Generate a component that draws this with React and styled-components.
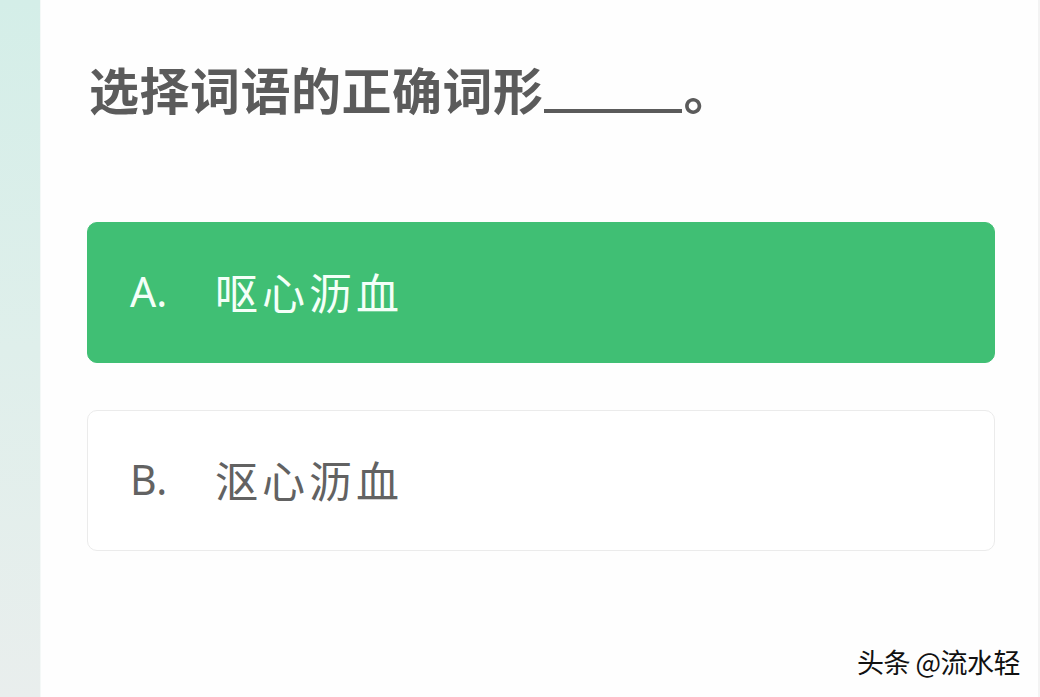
import React from 'react'
import styled, { createGlobalStyle } from 'styled-components'

const GlobalStyle = createGlobalStyle`
  html, body {
    margin: 0;
    padding: 0;
    background: #ffffff;
  }
  body {
    font-family: 'Noto Sans CJK SC', 'Noto Sans', sans-serif;
    -webkit-font-smoothing: antialiased;
  }
`

const Screen = styled.div`
  display: flex;
  width: 1040px;
  height: 697px;
  overflow: hidden;
  position: relative;
`

const SideStrip = styled.div`
  width: 40px;
  flex: 0 0 40px;
  background: linear-gradient(180deg, #d4eee8 0%, #dfefeb 50%, #e9eeed 100%);
`

const Panel = styled.main`
  flex: 1;
  display: flex;
  flex-direction: column;
  padding: 0 43px 0 46px;
  background: #fefefe;
  border-left: 1px solid #f4f8f7;
  border-right: 2px solid #f3f3f3;
`

const Question = styled.h1`
  margin: 52px 0 0 2px;
  font-size: 50px;
  line-height: 72px;
  font-weight: 700;
  color: #5b5b5b;
  letter-spacing: 0.5px;
  white-space: nowrap;
`

const Blank = styled.span`
  display: inline-block;
  width: 138px;
  height: 4px;
  margin: 0 2px -3px 0;
  background: #5b5b5b;
  vertical-align: baseline;
`

const Options = styled.div`
  display: flex;
  flex-direction: column;
  gap: 47px;
  margin-top: 98px;
`

const Option = styled.div`
  display: flex;
  align-items: center;
  height: 141px;
  box-sizing: border-box;
  padding-left: 42px;
  padding-bottom: 4px;
  border-radius: 10px;
  background: ${p => (p.selected ? '#40bf74' : '#ffffff')};
  border: 1px solid ${p => (p.selected ? '#40bf74' : '#ebebeb')};
  color: ${p => (p.selected ? '#f4fff8' : '#626262')};
`

const Label = styled.span`
  width: 85px;
  font-size: 41px;
  font-family: 'Noto Sans', 'Noto Sans CJK SC', sans-serif;
`

const Word = styled.span`
  font-size: 43px;
  letter-spacing: 4px;
`

const Watermark = styled.div`
  position: absolute;
  right: 20px;
  bottom: 16px;
  font-size: 27px;
  color: #111111;
  letter-spacing: -0.5px;
  text-shadow: 1px 1px 0 #ffffff, -1px -1px 0 #ffffff;
`

const options = [
  { key: 'A', text: '呕心沥血', selected: true },
  { key: 'B', text: '沤心沥血', selected: false },
]

export default function App() {
  return (
    <Screen>
      <GlobalStyle />
      <SideStrip />
      <Panel>
        <Question>
          选择词语的正确词形<Blank />。
        </Question>
        <Options>
          {options.map(o => (
            <Option key={o.key} selected={o.selected}>
              <Label>{o.key}.</Label>
              <Word>{o.text}</Word>
            </Option>
          ))}
        </Options>
      </Panel>
      <Watermark>头条 @流水轻</Watermark>
    </Screen>
  )
}
